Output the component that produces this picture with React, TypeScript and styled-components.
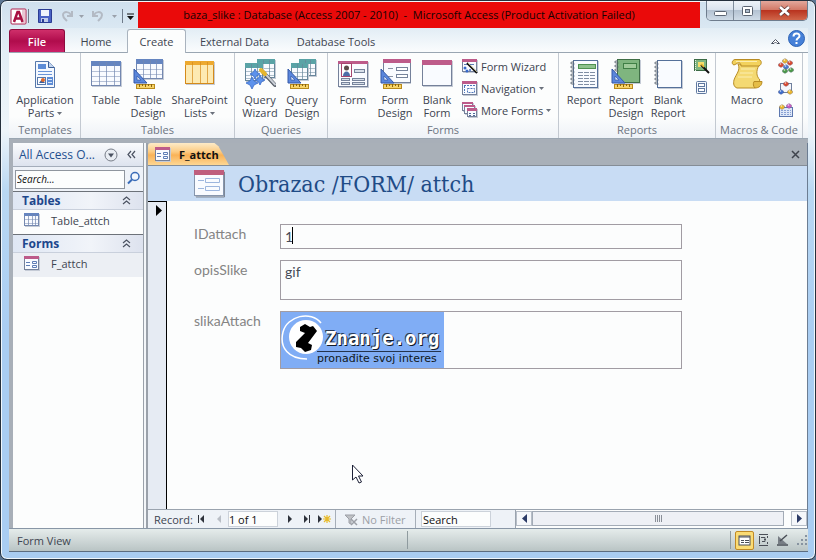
import React from 'react';
import styled, { createGlobalStyle } from 'styled-components';

const GlobalStyle = createGlobalStyle`
  *, *::before, *::after { box-sizing: border-box; }
  body {
    margin: 0;
    background: #5d7794;
    font-family: "Open Sans", "Noto Sans", sans-serif;
    font-size: 11px;
    color: #3d4450;
  }
  button, input, textarea { font: inherit; color: inherit; }
  button { border: 0; padding: 0; background: none; cursor: default; }
`;

/* ---------- window frame ---------- */

const Window = styled.div`
  display: flex;
  flex-direction: column;
  min-height: 100vh;
  padding: 0 7px 7px 8px;
  border: 1px solid #25303c;
  border-radius: 7px;
  background: linear-gradient(#cfe0ee 0, #e3eef6 50px, #eef5fa 130px, #b9d8f3 190px, #a9cdf2 60%, #a9cdf2);
  box-shadow: inset 0 0 0 1px #f0f7fc;
`;

const TitleBar = styled.header`
  display: flex;
  height: 27px;
  align-items: flex-start;
`;

const QuickAccess = styled.div`
  display: flex;
  align-items: center;
  width: 129px;
  height: 27px;
  padding-top: 3px;
`;

const QuickButton = styled.button<{ $w: number }>`
  display: flex;
  justify-content: center;
  width: ${(p) => p.$w}px;
`;

const QuickRule = styled.span`
  width: 1px;
  height: 14px;
  background: #6f7b8a;
`;

const Caption = styled.h1`
  flex: 1;
  margin: 1px 6px 0 0;
  padding-right: 20px;
  background: #ea0a0a;
  color: #160202;
  font-size: 11px;
  font-weight: 400;
  line-height: 26px;
  text-align: center;
  white-space: pre;
  overflow: hidden;
`;

const WindowButtons = styled.div`
  display: flex;
  height: 20px;
  border: 1px solid #6e7c8d;
  border-top: 0;
  border-radius: 0 0 5px 5px;
  overflow: hidden;
`;

const WindowButton = styled.button<{ $close?: boolean }>`
  display: flex;
  align-items: center;
  justify-content: center;
  width: ${(p) => (p.$close ? 46 : 27)}px;
  border-right: ${(p) => (p.$close ? '0' : '1px solid #7f8c9b')};
  background: ${(p) =>
    p.$close
      ? 'linear-gradient(#e3a89c 0, #d37a68 45%, #b93420 50%, #d0664a 100%)'
      : 'linear-gradient(#eef3f8 0, #dbe4ee 45%, #b4c2d2 50%, #cfdbe7 100%)'};
`;

/* ---------- ribbon ---------- */

const TabRow = styled.nav`
  display: flex;
  align-items: flex-end;
  height: 24px;
  padding-top: 1px;
  background: linear-gradient(#e2edf5, #fafcfd);
`;

const FileTab = styled.button`
  width: 56px;
  height: 23px;
  border: 1px solid #8d0b3e;
  border-bottom: 0;
  border-radius: 3px 3px 0 0;
  background: linear-gradient(#cf2f6a, #b00c4c 50%, #cb2067);
  color: #fff;
  font-weight: 600;
`;

const RibbonTab = styled.button<{ $active?: boolean; $w: number }>`
  position: relative;
  width: ${(p) => p.$w}px;
  height: ${(p) => (p.$active ? 24 : 23)}px;
  margin-bottom: ${(p) => (p.$active ? -1 : 0)}px;
  border: 1px solid ${(p) => (p.$active ? '#a9b3be' : 'transparent')};
  border-bottom: 0;
  border-radius: 3px 3px 0 0;
  background: ${(p) => (p.$active ? '#fcfdfd' : 'transparent')};
  white-space: nowrap;
`;

const RibbonHelp = styled.div`
  display: flex;
  align-items: center;
  gap: 8px;
  height: 24px;
  margin-left: auto;
  padding-right: 3px;
`;

const Ribbon = styled.section`
  display: flex;
  padding-left: 1px;
  border: 1px solid #9aa6b2;
  border-width: 1px 0;
  background: linear-gradient(#fcfdfd 75%, #eef2f7);
`;

const Group = styled.div`
  display: flex;
  flex-direction: column;
  padding: 5px 4px 0;
  border-right: 1px solid #c3c9d1;
`;

const GroupTools = styled.div`
  display: flex;
  height: 64px;
`;

const GroupName = styled.div`
  height: 16px;
  color: #6c7482;
  line-height: 16px;
  text-align: center;
  white-space: nowrap;
`;

const LargeTool = styled.button<{ $w?: number }>`
  display: flex;
  flex-direction: column;
  align-items: center;
  gap: 3px;
  width: ${(p) => p.$w ?? 42}px;
`;

const LargeLabel = styled.span`
  line-height: 13px;
  text-align: center;
  white-space: pre;
`;

const SmallTools = styled.div<{ $w: number }>`
  display: flex;
  flex-direction: column;
  width: ${(p) => p.$w}px;
  margin-top: -3px;
  padding-left: 4px;
`;

const SmallTool = styled.button`
  display: flex;
  flex-shrink: 0;
  align-items: center;
  gap: 3px;
  height: 22px;
  white-space: nowrap;
`;

/* ---------- workspace ---------- */

const Workspace = styled.div`
  display: flex;
  flex: 1;
  padding: 4px 0 0 4px;
  background: #a8afb8;
`;

const NavPane = styled.aside`
  width: 130px;
  background: #fcfdfd;
`;

const NavHeader = styled.div`
  display: flex;
  align-items: center;
  height: 23px;
  padding: 0 5px 0 6px;
  background: linear-gradient(#fafbfd, #dde3ee);
  color: #24508f;
  font-size: 12px;
  white-space: nowrap;
`;

const NavHeaderText = styled.span`
  flex: 1;
`;

const NavButton = styled.button`
  display: flex;
  justify-content: center;
  min-width: 14px;
  margin-left: 6px;
`;

const SearchRow = styled.div`
  display: flex;
  align-items: center;
  height: 25px;
  gap: 2px;
  padding: 0 2px;
  border-top: 1px solid #a4adba;
  background: #eef2f8;
`;

const NavSearch = styled.input`
  flex: 1;
  min-width: 0;
  height: 19px;
  padding: 0 1px;
  border: 1px solid #8f959e;
  background: #fcfdfd;
  color: #111;
  font-style: italic;
  font-size: 10px;
  &::placeholder { color: #111; opacity: 1; }
`;

const NavGroupHeader = styled.button`
  display: flex;
  align-items: center;
  justify-content: space-between;
  width: 100%;
  height: 19px;
  padding: 0 12px 0 9px;
  border-top: 1px solid #6d7279;
  border-bottom: 1px solid #c9d0dc;
  background: linear-gradient(90deg, #dfe7f4, #f1f4f9 60%, #dde2ee);
  color: #1d478c;
  font-size: 12px;
  font-weight: 700;
`;

const NavItem = styled.button<{ $selected?: boolean }>`
  display: flex;
  align-items: center;
  gap: 11px;
  width: 100%;
  height: 24px;
  padding: 0 0 4px 11px;
  background: ${(p) => (p.$selected ? '#eceff4' : 'transparent')};
`;

const Splitter = styled.div`
  width: 5px;
  border-left: 1px solid #9aa1aa;
  border-right: 2px solid #9aa1aa;
  background: #f3f6f9;
`;

const Document = styled.main`
  display: flex;
  flex: 1;
  flex-direction: column;
  min-width: 0;
  border-right: 1px solid #6c7d92;
  background: #fcfdfd;
`;

const DocTabs = styled.div`
  display: flex;
  align-items: center;
  justify-content: space-between;
  height: 23px;
  padding-right: 7px;
  border-bottom: 1px solid #858d96;
  background: #a9b0b8;
`;

const DocTab = styled.button`
  display: flex;
  align-items: center;
  gap: 8px;
  width: 81px;
  height: 22px;
  padding-left: 7px;
  border-radius: 3px 0 0 0;
  clip-path: polygon(0 0, 82% 0, 87% 15%, 100% 100%, 0 100%);
  background: linear-gradient(#fdebc8 0, #fccb82 40%, #f9b257 55%, #fdd794);
  color: #111;
  font-weight: 700;
`;

const FormHeader = styled.div`
  display: flex;
  align-items: center;
  gap: 12px;
  height: 35px;
  padding-left: 45px;
  background: #c8dcf4;
`;

const FormTitle = styled.h2`
  margin: 0;
  color: #1f4b86;
  font: 400 23px/30px "DejaVu Serif Condensed", "DejaVu Serif", serif;
  white-space: nowrap;
`;

const FormBody = styled.div`
  display: flex;
  flex: 1;
`;

const RecordSelector = styled.div`
  width: 19px;
  padding: 3px 0 0 8px;
  border-top: 1px solid #000;
  border-right: 1px solid #000;
  background: #e6ebf3;
`;

const FormCanvas = styled.div`
  position: relative;
  display: flex;
  flex: 1;
`;

const Pointer = styled.svg`
  position: absolute;
  left: 185px;
  top: 263px;
`;

const Fields = styled.form`
  display: grid;
  flex: 1;
  grid-template-columns: 86px minmax(0, 402px);
  align-content: start;
  row-gap: 11px;
  padding: 23px 12px 12px 27px;
  font-family: Lato, "Open Sans", sans-serif;
  font-size: 14px;
`;

const FieldLabel = styled.label`
  padding-top: 1px;
  color: #848484;
  line-height: 18px;
`;

const FieldSlot = styled.div`
  position: relative;
  display: flex;
`;

const TextField = styled.input`
  width: 100%;
  height: 25px;
  padding: 0 4px 1px;
  border: 1px solid #a19ca3;
  border-radius: 0;
  background: transparent;
  outline: none;
  color: #454b57;
`;

const TextArea = styled.textarea`
  width: 100%;
  height: 40px;
  padding: 2px 4px;
  border: 1px solid #a19ca3;
  background: transparent;
  color: #454b57;
  line-height: 18px;
  outline: none;
  resize: none;
`;

const Caret = styled.span`
  position: absolute;
  top: 3px;
  left: 12px;
  width: 1px;
  height: 17px;
  background: #000;
`;

const Attachment = styled.div`
  flex: 1;
  height: 58px;
  border: 1px solid #a19ca3;
`;

const LogoImage = styled.div`
  display: flex;
  width: 163px;
  height: 56px;
  background: #80adf5;
`;

const LogoWords = styled.div`
  width: 124px;
  margin-left: -7px;
  padding-top: 14px;
  font-family: "DejaVu Sans", sans-serif;
  white-space: nowrap;
`;

const LogoName = styled.div`
  padding-left: 8px;
  border-bottom: 1px solid #24344f;
  color: #fff;
  font: 700 19px/25px "DejaVu Sans Mono", monospace;
  text-shadow: 1px 1px 0 #121a28, -1px -1px 0 #273a58;
`;

const LogoMotto = styled.div`
  color: #101820;
  font-size: 11px;
  line-height: 13px;
`;

/* ---------- record navigation and status bar ---------- */

const RecordBar = styled.div`
  display: flex;
  height: 19px;
  border-top: 1px solid #9aa3ae;
  background: #eef2f7;
`;

const RecordNav = styled.div`
  display: flex;
  align-items: center;
  width: 188px;
  padding-left: 6px;
  border-right: 1px solid #a6aeb8;
`;

const RecordButton = styled.button<{ $w: number }>`
  display: flex;
  justify-content: center;
  width: ${(p) => p.$w}px;
`;

const RecordNumber = styled.input`
  width: 50px;
  height: 16px;
  margin-right: 4px;
  padding: 0;
  border: 1px solid #ccd2da;
  background: #fcfdfd;
  color: #111;
`;

const FilterButton = styled.button`
  display: flex;
  align-items: center;
  gap: 4px;
  width: 80px;
  padding-left: 8px;
  border-right: 1px solid #a6aeb8;
  color: #9c9fa6;
  white-space: nowrap;
`;

const RecordSearch = styled.input`
  width: 70px;
  height: 16px;
  margin: 1px 24px 0 5px;
  padding: 0 1px;
  border: 1px solid #ccd2da;
  background: #fcfdfd;
  color: #111;
  &::placeholder { color: #111; opacity: 1; }
`;

const ScrollArea = styled.div`
  display: flex;
  flex: 1;
  padding-top: 1px;
  border-left: 1px solid #9aa3ae;
  background: #fcfdfd;
`;

const ScrollArrow = styled.button`
  display: flex;
  align-items: center;
  justify-content: center;
  width: 16px;
  height: 15px;
  border: 1px solid #b7bec8;
  background: #f5f7fa;
`;

const ScrollThumb = styled.div`
  display: flex;
  flex: 1;
  align-items: center;
  justify-content: center;
  gap: 1px;
  height: 15px;
  margin-right: 7px;
  border: 1px solid #a3abb6;
  background: #eef0f5;
`;

const Grip = styled.span`
  width: 1px;
  height: 7px;
  background: #8a8f98;
`;

const StatusBar = styled.footer`
  display: flex;
  align-items: center;
  height: 24px;
  padding-left: 8px;
  border-top: 1px solid #8896a6;
  border-bottom: 1px solid #5c6d80;
  background: linear-gradient(#e5eceb, #cbd4d4 60%, #b9c4c4);
`;

const StatusText = styled.span`
  flex: 1;
`;

const StatusRule = styled.span<{ $gap: number }>`
  width: 1px;
  height: 18px;
  margin-right: ${(p) => p.$gap}px;
  background: #8f9b9f;
`;

const StatusMessage = styled.span`
  width: 322px;
`;

const ViewButton = styled.button<{ $active?: boolean }>`
  display: flex;
  align-items: center;
  justify-content: center;
  width: 19px;
  height: 19px;
  border: 1px solid ${(p) => (p.$active ? '#c08a26' : 'transparent')};
  border-radius: 2px;
  background: ${(p) => (p.$active ? '#fbdc74' : 'transparent')};
`;

const ResizeGrip = styled.span`
  display: flex;
  margin-left: 4px;
`;

/* ---------- icon drawings ---------- */

type Art = { children: React.ReactNode; w?: number; h?: number };

const Svg = ({ children, w = 32, h = 32 }: Art) => (
  <svg width={w} height={h} viewBox={`0 0 ${w} ${h}`} fill="none" aria-hidden="true">
    {children}
  </svg>
);

type SheetProps = {
  x: number; y: number; w: number; h: number;
  head: string; line: string; cols?: number; rows?: number; headH?: number; fill?: string;
};

const Sheet = ({ x, y, w, h, head, line, cols = 0, rows = 0, headH = 5, fill = '#f9fbff' }: SheetProps) => (
  <g shapeRendering="crispEdges">
    <rect x={x + 1} y={y + 1} width={w} height={h} fill="#c5cbd6" />
    <rect x={x} y={y} width={w} height={h} fill={line} />
    <rect x={x + 1} y={y + 1} width={w - 2} height={h - 2} fill={fill} />
    <rect x={x} y={y} width={w} height={headH} fill={head} />
    {Array.from({ length: Math.max(cols - 1, 0) }, (_, i) => (
      <rect key={`c${i}`} x={x + Math.round(((i + 1) * w) / cols)} y={y + 1} width="1" height={h - 2} fill={line} opacity="0.7" />
    ))}
    {Array.from({ length: Math.max(rows - 1, 0) }, (_, i) => (
      <rect key={`r${i}`} x={x + 1} y={y + headH + Math.round(((i + 1) * (h - headH)) / rows)} width={w - 2} height="1" fill={line} opacity="0.5" />
    ))}
  </g>
);

const BLUE = { head: '#6585c0', line: '#7488b0' };
const TEAL = { head: '#5aa3a6', line: '#66859a' };
const PINK = { head: '#bd5b8a', line: '#75819a' };

const DesignTools = ({ x = 2 }: { x?: number }) => (
  <g>
    <path d={`M${x} 11v14h13z`} fill="#5a86dc" stroke="#3459a8" />
    <path d={`M${x + 3} 18v4h4z`} fill="#dfe9fb" stroke="#3459a8" strokeWidth="0.7" />
    <rect x={x + 2.5} y="26.5" width="18" height="4" fill="#f7d469" stroke="#b88a1c" />
    <path d={`M${x + 5.5} 26v3m3-3v2m3-2v3m3-3v2m3-2v3`} stroke="#8a6410" />
  </g>
);

const Spiral = ({ x, top, bottom }: { x: number; top: number; bottom: number }) => (
  <g stroke="#5c6672" strokeWidth="1">
    {Array.from({ length: Math.floor((bottom - top) / 4) }, (_, i) => (
      <path key={i} d={`M${x + 3} ${top + i * 4 + 1}h-2.5q-1.5 1 0 2h3`} />
    ))}
  </g>
);

const Wand = () => (
  <g strokeLinecap="round">
    <path d="M19 14l12 13" stroke="#555c66" strokeWidth="4" />
    <path d="M20 14.500l11 12" stroke="#c9ced6" strokeWidth="2" />
    <path d="M17 12l4 4" stroke="#e6b62c" strokeWidth="4" />
  </g>
);

const Sparkle = ({ x, y, s }: { x: number; y: number; s: number }) => (
  <path
    d={`M${x} ${y - s}l${s / 3} ${(s * 2) / 3}l${(s * 2) / 3} ${s / 3}l${(-s * 2) / 3} ${s / 3}l${-s / 3} ${(s * 2) / 3}l${-s / 3} ${(-s * 2) / 3}l${(-s * 2) / 3} ${-s / 3}l${(s * 2) / 3} ${-s / 3}z`}
    fill="#5d92ec" stroke="#3769c8" strokeWidth="0.8"
  />
);

const AppPartsIcon = () => (
  <Svg>
    <path d="M6.500 3.500h13l6 6v20h-19z" fill="#f4f8fe" stroke="#5678ab" />
    <path d="M19.500 3.500v6h6" fill="#c4d5ee" stroke="#3c5f96" />
    <rect x="9" y="6" width="8" height="5" fill="#5d8cd6" />
    <path d="M9 13.500h14M9 16.500h14" stroke="#6a94d8" />
    <rect x="8.500" y="19.500" width="8" height="7" fill="#fdfdfd" stroke="#5678ab" />
    <path d="M10 25l3-4 3 4z" fill="#3b5d99" /><circle cx="14" cy="22" r="2" fill="#e06b2c" />
    <rect x="18" y="19" width="6" height="8" fill="#5d8cd6" />
    <path d="M19 21.500h4M19 24.500h4" stroke="#dbe8fa" />
  </Svg>
);
const TableIcon = () => <Svg><Sheet x={1} y={3} w={30} h={25} {...BLUE} cols={4} rows={4} /></Svg>;
const TableDesignIcon = () => <Svg><Sheet x={4} y={1} w={27} h={20} {...BLUE} cols={4} rows={3} /><DesignTools /></Svg>;
const SharePointIcon = () => <Svg><Sheet x={1} y={3} w={29} h={23} head="#eda92f" line="#d48a1a" fill="#fdeab2" cols={4} headH={4} /></Svg>;
const QueryWizardIcon = () => (
  <Svg>
    <Sheet x={13} y={1} w={18} h={19} {...TEAL} cols={3} rows={4} />
    <Sheet x={1} y={5} w={18} h={18} {...TEAL} cols={3} rows={4} />
    <Wand />
    <Sparkle x={11} y={16} s={5} /><Sparkle x={8} y={25} s={6} /><Sparkle x={16} y={22} s={5} />
  </Svg>
);
const QueryDesignIcon = () => (
  <Svg>
    <Sheet x={13} y={1} w={17} h={17} {...TEAL} cols={3} rows={3} />
    <Sheet x={5} y={5} w={17} h={17} {...TEAL} cols={3} rows={3} />
    <DesignTools />
  </Svg>
);
const FormIcon = () => (
  <Svg>
    <Sheet x={1} y={3} w={30} h={26} {...PINK} headH={3} />
    <rect x="4.500" y="5.500" width="10" height="13" fill="#fff" stroke="#a8466f" />
    <circle cx="9.500" cy="10" r="2.500" fill="#5b4a48" /><path d="M6 18c0-6 7-6 7 0z" fill="#4c6da8" />
    <rect x="17.500" y="11.500" width="10" height="3" fill="#d9e0ea" stroke="#76839b" />
    <g fill="#d9e0ea" stroke="#76839b">
      <rect x="4.500" y="20.500" width="8" height="2" /><rect x="15.500" y="20.500" width="12" height="2" />
      <rect x="4.500" y="24.500" width="8" height="2" /><rect x="15.500" y="24.500" width="12" height="2" />
    </g>
  </Svg>
);
const FormDesignIcon = () => (
  <Svg>
    <Sheet x={4} y={1} w={28} h={24} {...PINK} headH={4} />
    <path d="M9 10.500h5M9 18.500h5" stroke="#8a93a5" />
    <rect x="17.500" y="9.500" width="11" height="3" fill="#fff" stroke="#76839b" />
    <rect x="17.500" y="16.500" width="11" height="3" fill="#fff" stroke="#76839b" />
    <DesignTools />
  </Svg>
);
const BlankFormIcon = () => <Svg><Sheet x={1} y={2} w={30} h={26} {...PINK} headH={5} /></Svg>;
const ReportIcon = () => (
  <Svg>
    <Sheet x={5} y={2} w={25} h={28} head="#55709a" line="#55709a" headH={1} />
    <rect x="10.500" y="6.500" width="17" height="4" fill="#8ec28d" stroke="#4f9151" />
    <path d="M10 14.500h18M10 17.500h18M10 20.500h18M10 23.500h18M10 26.500h18" stroke="#7f8da3" strokeDasharray="5 1" />
    <Spiral x={3} top={3} bottom={29} />
  </Svg>
);
const ReportDesignIcon = () => (
  <Svg>
    <Sheet x={7} y={1} w={23} h={24} head="#3f6e46" line="#3f6e46" headH={1} fill="#7fb57f" />
    <rect x="13.500" y="5.500" width="13" height="5" fill="#9fcb9a" stroke="#3f7f45" />
    <Spiral x={5} top={2} bottom={14} />
    <DesignTools />
  </Svg>
);
const BlankReportIcon = () => (
  <Svg>
    <Sheet x={5} y={2} w={25} h={28} head="#55709a" line="#55709a" headH={1} />
    <Spiral x={3} top={3} bottom={29} />
  </Svg>
);
const MacroIcon = () => (
  <Svg>
    <path d="M7 6C10 12 5 16 3 22c-1 4 0 7 3 8h18c2-2 2-5 5-8-4-4-4-9-1-15z" fill="#f4d972" stroke="#b88c24" />
    <path d="M4 1.500h24c3 1 3 5 0 6.500H10c0-3-2-4-4-2.500L3 7C0 6 1 2 4 1.500z" fill="#f3d25c" stroke="#b88c24" />
    <path d="M23 23.500h8c0 4-3 6.500-7 6.500-2-2-2-4-1-6.500z" fill="#e5bd47" stroke="#b88c24" />
    <path d="M5 3.500h21M10 11h14M9 15h13M7 19h14" stroke="#fbeeb0" />
  </Svg>
);

const MiniFormArt = ({ x = 0, y = 0, w = 15, h = 14 }) => (
  <g>
    <Sheet x={x} y={y} w={w} h={h} {...PINK} headH={3} />
    <path d={`M${x + 2} ${y + 6.5}h4m-4 3h4`} stroke="#5e7db5" />
    <path d={`M${x + 8.5} ${y + 5.5}h4v2h-4zm0 4h4v2h-4z`} stroke="#5e7db5" />
  </g>
);
const MiniForm = () => <Svg w={16} h={15}><MiniFormArt /></Svg>;
const FormWizardIcon = () => (
  <Svg w={16} h={16}>
    <Sheet x={0} y={1} w={15} h={13} {...PINK} headH={3} />
    <path d="M2 6.500h4M8 6.500h4" stroke="#5e7db5" />
    <path d="M5 5l10 10" stroke="#111" strokeWidth="2" /><path d="M6 5l9 9" stroke="#f2e9b0" strokeWidth="0.700" />
    <circle cx="3" cy="10" r="1.500" fill="#3769c8" /><circle cx="5" cy="13" r="1.500" fill="#3769c8" /><circle cx="8" cy="12" r="1" fill="#3769c8" />
  </Svg>
);
const NavigationIcon = () => (
  <Svg w={16} h={16}>
    <Sheet x={0} y={1} w={15} h={14} {...PINK} headH={3} />
    <path d="M2.500 6v7M2 5.500h11M5.500 8.500h7v4h-7z" stroke="#4f76b8" strokeDasharray="2 1" />
  </Svg>
);
const MoreFormsIcon = () => (
  <Svg w={16} h={16}>
    <Sheet x={0} y={0} w={11} h={9} {...PINK} headH={2} />
    <Sheet x={2} y={3} w={11} h={9} {...PINK} headH={2} />
    <Sheet x={5} y={6} w={10} h={9} {...PINK} headH={3} />
    <path d="M7 11.500h2m2 0h2M7 13.500h2m2 0h2" stroke="#4f6a9a" />
  </Svg>
);
const ReportWizardIcon = () => (
  <Svg w={17} h={16}>
    <rect x="1.500" y="1.500" width="12" height="11" fill="#7fb57f" stroke="#3c6b45" />
    <path d="M2.500 2v11" stroke="#e8efe6" strokeDasharray="1 1" />
    <rect x="5" y="4" width="6" height="5" fill="#f5dc6c" />
    <path d="M8 7l8 8" stroke="#111" strokeWidth="2" /><path d="M8 6l3 3" stroke="#e6b62c" strokeWidth="1.500" />
  </Svg>
);
const LabelsIcon = () => (
  <Svg w={16} h={16}>
    <rect x="3.500" y="1.500" width="10" height="12" rx="1" fill="#f4f8fd" stroke="#5f789f" />
    <rect x="5.500" y="3.500" width="6" height="3" fill="#fff" stroke="#5f789f" />
    <rect x="5.500" y="8.500" width="6" height="3" fill="#fff" stroke="#5f789f" />
  </Svg>
);
const Ball = ({ x, y, c }: { x: number; y: number; c: string }) => (
  <g>
    <path d={`M${x} ${y - 2.5}l2.500 1.500v2l-2.500 1.500l-2.500-1.500v-2z`} fill={c} stroke="#4a4a6a" strokeOpacity="0.4" strokeWidth="0.700" />
    <circle cx={x - 0.5} cy={y - 1} r="0.800" fill="#fff" fillOpacity="0.8" />
  </g>
);
const ModuleIcon = () => (
  <Svg w={16} h={16}>
    <Ball x={7} y={3} c="#e9b52e" /><Ball x={12} y={5} c="#d9482f" /><Ball x={3} y={7} c="#d9482f" />
    <Ball x={8} y={9} c="#4a78cf" /><Ball x={13} y={12} c="#4c9a4a" /><Ball x={7} y={13} c="#4c9a4a" />
  </Svg>
);
const ClassIcon = () => (
  <Svg w={16} h={16}>
    <rect x="2.500" y="3.500" width="11" height="9" fill="#f4f6fb" stroke="#6f7f9c" />
    <Ball x={8} y={4} c="#d9482f" /><Ball x={3} y={12} c="#3f6dcb" /><Ball x={12} y={12} c="#e9b52e" />
  </Svg>
);
const BasicIcon = () => (
  <Svg w={16} h={16}>
    <rect x="1.500" y="5.500" width="13" height="9" fill="#dfe8f8" stroke="#5d78b0" />
    <path d="M3 8.500h10M3 10.500h10M3 12.500h10" stroke="#89a2d4" strokeDasharray="2 1" />
    <Ball x={4} y={5} c="#e9b52e" /><Ball x={11} y={4} c="#c65bc0" />
  </Svg>
);
const NavTableIcon = () => <Svg w={16} h={14}><Sheet x={0} y={0} w={15} h={13} {...BLUE} cols={4} rows={3} headH={3} /></Svg>;

const AccessIcon = () => (
  <Svg w={17} h={17}>
    <rect x="1" y="1" width="15" height="15" rx="1" fill="#fff" stroke="#b0204f" />
    <rect x="12" y="2" width="3" height="13" fill="#e9c6d3" />
    <path d="M4 14l3.500-10h1.500l3.500 10M5.500 10.500h5.500" stroke="#a81043" strokeWidth="2.500" />
  </Svg>
);
const SaveIcon = () => (
  <Svg w={14} h={14}>
    <path d="M.5.500h13v13h-13z" fill="#4a62c4" stroke="#2b3c93" />
    <rect x="3" y="1" width="8" height="6" fill="#eff3fb" /><rect x="3" y="9" width="7" height="4" fill="#bfcbea" /><rect x="4" y="10" width="2" height="3" fill="#2b3c93" />
  </Svg>
);
const TurnIcon = ({ flip = false }: { flip?: boolean }) => (
  <Svg w={13} h={12}>
    <g transform={flip ? 'translate(13 0) scale(-1 1)' : undefined} stroke="#b3bac4" strokeWidth="2">
      <path d="M11 1v5H6M10 6C9 1 2 1 2 5c0 3 2 4 4 6" />
    </g>
  </Svg>
);
const Down = ({ c = '#6b717c' }: { c?: string }) => (
  <svg width="5" height="8" viewBox="0 0 5 8" aria-hidden="true"><path d="M0 3h5l-2.500 3z" fill={c} /></svg>
);
const Chevrons = ({ side = false }: { side?: boolean }) => (
  <Svg w={9} h={9}>
    <path d={side ? 'M4 1L1 4.500l3 3.500M8 1L5 4.500l3 3.500' : 'M1 4l3.500-3 3.500 3M1 8l3.500-3 3.500 3'} stroke="#4b5261" strokeWidth="1.200" />
  </Svg>
);
const Arrow = ({ kind }: { kind: 'first' | 'prev' | 'next' | 'last' | 'new' }) => (
  <Svg w={kind === 'new' ? 13 : 7} h={8}>
    {kind === 'first' && <path d="M0 0h1v8H0zM6 0v8L2 4z" fill="#2e323b" />}
    {kind === 'prev' && <path d="M5 0v8L1 4z" fill="#b9bec6" />}
    {kind === 'next' && <path d="M1 0v8l4-4z" fill="#2e323b" />}
    {kind === 'last' && <path d="M0 0v8l4-4zM5 0h1v8H5z" fill="#2e323b" />}
    {kind === 'new' && (<><path d="M0 0v8l4-4z" fill="#2e323b" /><path d="M9 0v8M5 4h8M6 1l6 6M12 1L6 7" stroke="#e8bb2b" strokeWidth="1.200" /></>)}
  </Svg>
);

/* ---------- data ---------- */

type Large = { label: string; art: React.ReactNode; w?: number; menu?: boolean };
type Small = { label: string; art: React.ReactNode; menu?: boolean; iconOnly?: boolean };
type RibbonGroup = { name: string; large: Large[]; small?: Small[]; smallW?: number };

const groups: RibbonGroup[] = [
  { name: 'Templates', large: [{ label: 'Application\nParts', art: <AppPartsIcon />, w: 62, menu: true }] },
  {
    name: 'Tables',
    large: [
      { label: 'Table', art: <TableIcon /> },
      { label: 'Table\nDesign', art: <TableDesignIcon /> },
      { label: 'SharePoint\nLists', art: <SharePointIcon />, w: 61, menu: true },
    ],
  },
  {
    name: 'Queries',
    large: [
      { label: 'Query\nWizard', art: <QueryWizardIcon /> },
      { label: 'Query\nDesign', art: <QueryDesignIcon /> },
    ],
  },
  {
    name: 'Forms',
    large: [
      { label: 'Form', art: <FormIcon /> },
      { label: 'Form\nDesign', art: <FormDesignIcon /> },
      { label: 'Blank\nForm', art: <BlankFormIcon /> },
    ],
    smallW: 96,
    small: [
      { label: 'Form Wizard', art: <FormWizardIcon /> },
      { label: 'Navigation', art: <NavigationIcon />, menu: true },
      { label: 'More Forms', art: <MoreFormsIcon />, menu: true },
    ],
  },
  {
    name: 'Reports',
    large: [
      { label: 'Report', art: <ReportIcon /> },
      { label: 'Report\nDesign', art: <ReportDesignIcon /> },
      { label: 'Blank\nReport', art: <BlankReportIcon /> },
    ],
    smallW: 22,
    small: [
      { label: 'Report Wizard', art: <ReportWizardIcon />, iconOnly: true },
      { label: 'Labels', art: <LabelsIcon />, iconOnly: true },
    ],
  },
  {
    name: 'Macros & Code',
    large: [{ label: 'Macro', art: <MacroIcon />, w: 54 }],
    smallW: 22,
    small: [
      { label: 'Module', art: <ModuleIcon />, iconOnly: true },
      { label: 'Class Module', art: <ClassIcon />, iconOnly: true },
      { label: 'Visual Basic', art: <BasicIcon />, iconOnly: true },
    ],
  },
];

export default function App() {
  return (
    <>
      <GlobalStyle />
      <Window>
        <TitleBar>
          <QuickAccess>
            <QuickButton $w={19} aria-label="Access"><AccessIcon /></QuickButton>
            <QuickRule />
            <QuickButton $w={31} aria-label="Save"><SaveIcon /></QuickButton>
            <QuickButton $w={14} aria-label="Redo"><TurnIcon /></QuickButton>
            <QuickButton $w={15} aria-label="Redo list"><Down c="#9aa1ab" /></QuickButton>
            <QuickButton $w={17} aria-label="Undo"><TurnIcon flip /></QuickButton>
            <QuickButton $w={16} aria-label="Undo list"><Down c="#9aa1ab" /></QuickButton>
            <QuickRule />
            <QuickButton $w={15} aria-label="Customize toolbar">
              <Svg w={7} h={7}><path d="M0 1h7" stroke="#111" /><path d="M0 3h7L3.500 7z" fill="#111" /></Svg>
            </QuickButton>
          </QuickAccess>
          <Caption>{'baza_slike : Database (Access 2007 - 2010)  -  Microsoft Access (Product Activation Failed)'}</Caption>
          <WindowButtons>
            <WindowButton aria-label="Minimize"><Svg w={13} h={12}><rect x=".5" y="6.500" width="12" height="4" rx="1" fill="#fff" stroke="#5b6472" /></Svg></WindowButton>
            <WindowButton aria-label="Maximize"><Svg w={13} h={12}><rect x="1.500" y="1.500" width="10" height="9" rx="1" fill="#fff" stroke="#5b6472" /><rect x="4.500" y="4.500" width="4" height="3" fill="#aebccc" stroke="#5b6472" /></Svg></WindowButton>
            <WindowButton $close aria-label="Close"><Svg w={13} h={12}><path d="M2 2l9 8M11 2l-9 8" stroke="#5e3a3a" strokeWidth="4" /><path d="M2 2l9 8M11 2l-9 8" stroke="#fff" strokeWidth="2.500" /></Svg></WindowButton>
          </WindowButtons>
        </TitleBar>

        <TabRow>
          <FileTab>File</FileTab>
          <RibbonTab $w={62}>Home</RibbonTab>
          <RibbonTab $w={59} $active>Create</RibbonTab>
          <RibbonTab $w={97}>External Data</RibbonTab>
          <RibbonTab $w={106}>Database Tools</RibbonTab>
          <RibbonHelp>
            <button aria-label="Minimize the ribbon"><Svg w={9} h={7}><path d="M.5 5.500l4-4 4 4h-2.500l-1.500-1.500-1.500 1.500z" fill="#fff" stroke="#4b5261" /></Svg></button>
            <button aria-label="Help">
              <Svg w={17} h={17}><circle cx="8.500" cy="8.500" r="8" fill="#4580d8" stroke="#2d62b4" /><path d="M5.500 6.500c0-4 6-4 6-.500 0 2-3 2-3 4.500M8.500 12v2" stroke="#fff" strokeWidth="2" /></Svg>
            </button>
          </RibbonHelp>
        </TabRow>

        <Ribbon>
          {groups.map((g) => (
            <Group key={g.name}>
              <GroupTools>
                {g.large.map((t) => (
                  <LargeTool key={t.label} $w={t.w}>
                    {t.art}
                    <LargeLabel>{t.label}{t.menu && <> <Down /></>}</LargeLabel>
                  </LargeTool>
                ))}
                {g.small && (
                  <SmallTools $w={g.smallW ?? 22}>
                    {g.small.map((t) => (
                      <SmallTool key={t.label} aria-label={t.label}>
                        {t.art}
                        {!t.iconOnly && <span>{t.label}</span>}
                        {t.menu && <Down />}
                      </SmallTool>
                    ))}
                  </SmallTools>
                )}
              </GroupTools>
              <GroupName>{g.name}</GroupName>
            </Group>
          ))}
        </Ribbon>

        <Workspace>
          <NavPane>
            <NavHeader>
              <NavHeaderText>All Access O...</NavHeaderText>
              <NavButton aria-label="Choose objects"><Svg w={14} h={14}><circle cx="7" cy="7" r="6" fill="#e9edf3" stroke="#777d88" /><path d="M4 5.500h6L7 9.500z" fill="#4b5261" /></Svg></NavButton>
              <NavButton aria-label="Collapse pane"><Chevrons side /></NavButton>
            </NavHeader>
            <SearchRow>
              <NavSearch placeholder="Search..." aria-label="Search objects" />
              <button aria-label="Search"><Svg w={14} h={14}><circle cx="8" cy="5.500" r="4" fill="#f2f7fd" stroke="#3a6cb8" strokeWidth="1.500" /><path d="M5 8.500l-4 4" stroke="#3a6cb8" strokeWidth="2" /></Svg></button>
            </SearchRow>
            <NavGroupHeader>Tables<Chevrons /></NavGroupHeader>
            <NavItem><NavTableIcon />Table_attch</NavItem>
            <NavGroupHeader>Forms<Chevrons /></NavGroupHeader>
            <NavItem $selected><MiniForm />F_attch</NavItem>
          </NavPane>
          <Splitter />
          <Document>
            <DocTabs>
              <DocTab><MiniForm />F_attch</DocTab>
              <button aria-label="Close form"><Svg w={9} h={9}><path d="M1 1l7 7M8 1L1 8" stroke="#3f444d" strokeWidth="1.500" /></Svg></button>
            </DocTabs>
            <FormHeader>
              <Svg w={33} h={29}>
                <Sheet x={1} y={1} w={30} h={26} head="#bf5e7d" line="#8796ad" headH={5} />
                <path d="M5 11.500h6M5 19.500h6M12.500 9.500h14v4h-14zM12.500 17.500h14v4h-14z" stroke="#9db6de" />
                <path d="M31.500 3v25H3" stroke="#7c8797" />
              </Svg>
              <FormTitle>Obrazac /FORM/ attch</FormTitle>
            </FormHeader>
            <FormBody>
              <RecordSelector><Svg w={7} h={12}><path d="M0 0v11l6-5.500z" fill="#000" /></Svg></RecordSelector>
              <FormCanvas>
                <Fields>
                  <FieldLabel htmlFor="id-attach">IDattach</FieldLabel>
                  <FieldSlot><TextField id="id-attach" defaultValue="1" /><Caret /></FieldSlot>
                  <FieldLabel htmlFor="opis">opisSlike</FieldLabel>
                  <FieldSlot><TextArea id="opis" defaultValue="gif" /></FieldSlot>
                  <FieldLabel as="span">slikaAttach</FieldLabel>
                  <FieldSlot>
                    <Attachment>
                      <LogoImage>
                        <Svg w={43} h={56}>
                          <circle cx="25" cy="25" r="17" fill="#fff" />
                          <path d="M40 11C30-2 6 4 2 20s6 27 24 27" stroke="#fff" strokeWidth="1.500" />
                          <path d="M19 15l5-3 5 3 3-1 4 5-9 12 4 2-1 5-6 2-4-4-5-1v-5l9-9-5-2z" fill="#000" />
                        </Svg>
                        <LogoWords>
                          <LogoName>Znanje.org</LogoName>
                          <LogoMotto>pronađite svoj interes</LogoMotto>
                        </LogoWords>
                      </LogoImage>
                    </Attachment>
                  </FieldSlot>
                </Fields>
                <Pointer width="12" height="20" viewBox="0 0 12 20" aria-hidden="true">
                  <path d="M.5 1v15l3.500-3 3 6 2.500-1-3-6h4.500z" fill="#fff" stroke="#1c2036" />
                </Pointer>
              </FormCanvas>
            </FormBody>
            <RecordBar>
              <RecordNav>
                <span>Record:</span>
                <RecordButton $w={18} aria-label="First record"><Arrow kind="first" /></RecordButton>
                <RecordButton $w={17} aria-label="Previous record"><Arrow kind="prev" /></RecordButton>
                <RecordNumber aria-label="Record number" defaultValue="1 of 1" />
                <RecordButton $w={17} aria-label="Next record"><Arrow kind="next" /></RecordButton>
                <RecordButton $w={17} aria-label="Last record"><Arrow kind="last" /></RecordButton>
                <RecordButton $w={17} aria-label="New record"><Arrow kind="new" /></RecordButton>
              </RecordNav>
              <FilterButton>
                <Svg w={14} h={13}><path d="M1 2h10l-4 4v5l-2-1V6z" fill="#bfc1c5" stroke="#9c9fa6" /><path d="M7 6l6 6M13 6l-6 6" stroke="#9c9fa6" strokeWidth="1.500" /></Svg>
                No Filter
              </FilterButton>
              <RecordSearch placeholder="Search" aria-label="Search records" />
              <ScrollArea>
                <ScrollArrow aria-label="Scroll left"><Svg w={5} h={9}><path d="M5 0v9L0 4.500z" fill="#2b3a66" /></Svg></ScrollArrow>
                <ScrollThumb><Grip /><Grip /><Grip /><Grip /></ScrollThumb>
                <ScrollArrow aria-label="Scroll right"><Svg w={5} h={9}><path d="M0 0v9l5-4.500z" fill="#2b3a66" /></Svg></ScrollArrow>
              </ScrollArea>
            </RecordBar>
          </Document>
        </Workspace>

        <StatusBar>
          <StatusText>Form View</StatusText>
          <StatusRule $gap={0} />
          <StatusMessage />
          <StatusRule $gap={4} />
          <ViewButton $active aria-label="Form view"><Svg w={13} h={11}><rect x="1" y="1" width="11" height="9" fill="#fff" stroke="#4a4f57" /><path d="M1 2h11M3 5.500h3M3 7.500h3M7 5.500h4M7 7.500h4" stroke="#4a4f57" /></Svg></ViewButton>
          <ViewButton aria-label="Layout view"><Svg w={11} h={12}><path d="M1 .5h9M1 11.500h9M1.500 2v8M9.500 2v2M9.500 8v2M3 3.500h4v4h-3M8 5.500h-2" stroke="#4a4f57" /></Svg></ViewButton>
          <ViewButton aria-label="Design view"><Svg w={11} h={12}><path d="M1 2v8h9z" fill="#777d84" /><path d="M0 11h11M3 7l7-6" stroke="#4a4f57" strokeWidth="1.500" /></Svg></ViewButton>
          <ResizeGrip><Svg w={12} h={18}><path d="M9 5h2M9 9h2M5 9h2M9 13h2M5 13h2M1 13h2" stroke="#8793a0" strokeWidth="2" /></Svg></ResizeGrip>
        </StatusBar>
      </Window>
    </>
  );
}
